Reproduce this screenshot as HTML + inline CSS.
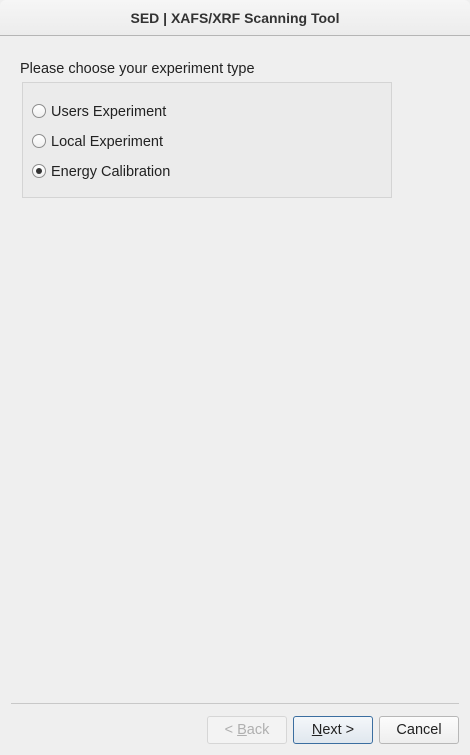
<!DOCTYPE html>
<html><head><style>
*{margin:0;padding:0;box-sizing:border-box}
body{width:470px;height:755px;background:#efefef;font-family:"Liberation Sans",sans-serif;font-size:14.5px;color:#222;position:relative;overflow:hidden}
.title{position:absolute;left:0;top:0;width:470px;height:36px;background:linear-gradient(#f6f6f6,#ececec);border-bottom:1px solid #b5b5b5;text-align:center;line-height:37px;font-size:14px;font-weight:bold;color:#333;border-radius:6px 6px 0 0}
.lbl{position:absolute;left:20px;top:61px}
.grp{position:absolute;left:22px;top:82px;width:370px;height:116px;border:1px solid #d4d4d4;background:#ebebeb}
.r{position:absolute;left:9px;height:20px;line-height:20px}
.r span{position:absolute;left:0;top:2px;width:14px;height:14px;border:1px solid #8e8e8e;border-radius:50%;background:linear-gradient(#fff,#f0f0f0)}
.r b{font-weight:normal;margin-left:19px}
.dot{position:absolute;left:3px;top:3px;width:6px;height:6px;border-radius:50%;background:#333}
.sep{position:absolute;left:11px;top:703px;width:448px;height:1px;background:#c8c8c8}
.btn{position:absolute;top:716px;height:28px;border:1px solid #b7b7b7;border-radius:3px;background:linear-gradient(#fcfcfc,#eeeeee);text-align:center;line-height:27px;color:#222}
</style></head><body>
<div class="title">SED | XAFS/XRF Scanning Tool</div>
<div class="lbl">Please choose your experiment type</div>
<div class="grp">
<div class="r" style="top:19px"><span></span><b>Users Experiment</b></div>
<div class="r" style="top:49px"><span></span><b>Local Experiment</b></div>
<div class="r" style="top:79px"><span><i class="dot"></i></span><b>Energy Calibration</b></div>
</div>
<div class="sep"></div>
<div class="btn" style="left:207px;width:80px;color:#b0b0b0;border-color:#d6d6d6;background:#f3f3f3">&lt; <u>B</u>ack</div>
<div class="btn" style="left:293px;width:80px;border-color:#3b6ea0;background:linear-gradient(#f4f7fa,#e0e7ee)"><u>N</u>ext &gt;</div>
<div class="btn" style="left:379px;width:80px">Cancel</div>
</body></html>
